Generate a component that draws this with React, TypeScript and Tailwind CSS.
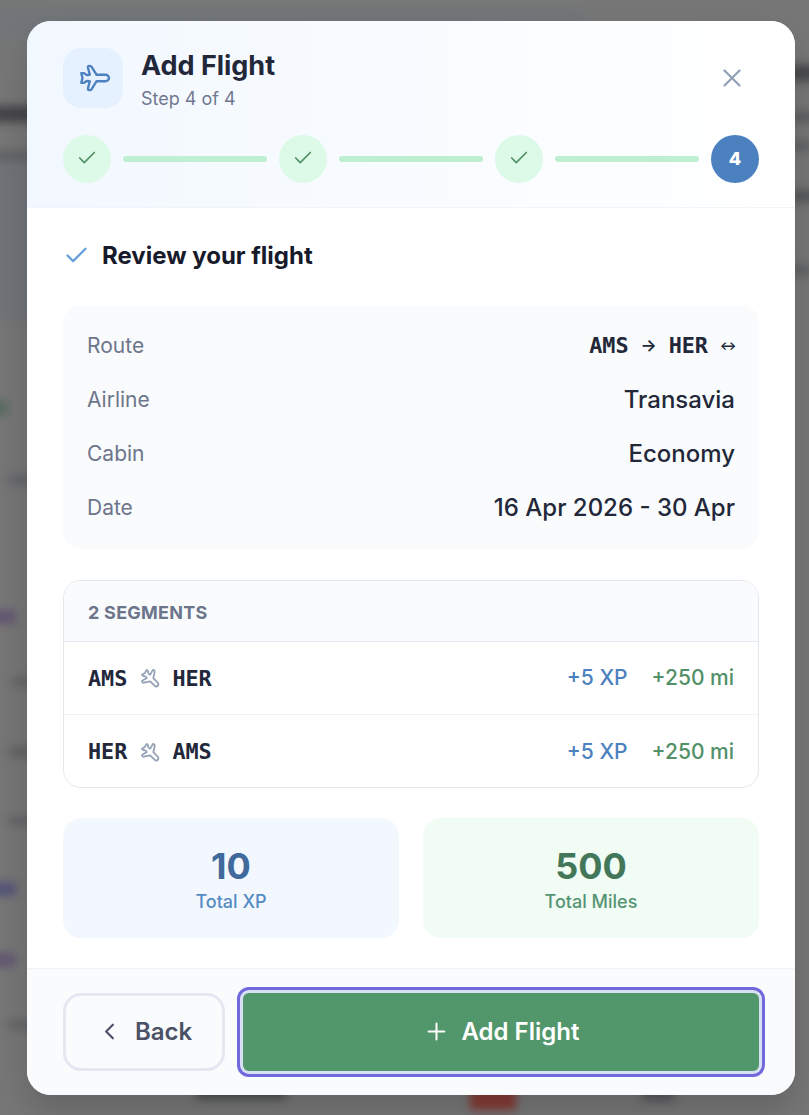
import { Check, ChevronLeft, Plus, X } from "lucide-react";

const details = [
  { label: "Airline", value: "Transavia" },
  { label: "Cabin", value: "Economy" },
  { label: "Date", value: "16 Apr 2026 - 30 Apr" },
];

const segments = [
  { from: "AMS", to: "HER", xp: "+5 XP", miles: "+250 mi" },
  { from: "HER", to: "AMS", xp: "+5 XP", miles: "+250 mi" },
];

const mono = "font-['DejaVu_Sans_Mono',monospace] font-bold";

interface PlaneProps {
  className?: string;
  strokeWidth?: number;
}

const Plane = ({
  className,
  strokeWidth = 2.4
}: PlaneProps) => {
  return <svg viewBox="-3 -16 32 32" className={className} overflow="visible" fill="none" stroke="currentColor" strokeWidth={strokeWidth} strokeLinejoin="round" strokeLinecap="round">
      <path d="M1.3 -4.9 L2.5 0 L1.3 4.9 H4 L6.6 3 L9.8 3.3 L8 10.2 Q7.6 12 9.3 12.1 H10 Q11 12.1 11.6 11.1 L16.6 3.2 H25.5 C27.5 3.2 29 1.7 29 0 C29 -1.7 27.5 -3.2 25.5 -3.2 H16.6 L11.6 -11.1 Q11 -12.1 10 -12.1 H9.3 Q7.6 -12 8 -10.2 L9.8 -3.3 L6.6 -3 L4 -4.9 Z" />
    </svg>;
};

// Blurred bits of the page behind the overlay
const Backdrop = () => {
  return <div className="absolute inset-0 overflow-hidden bg-[#777777]" aria-hidden="true">
      <div className="absolute top-[8px] -left-4 w-[600px] h-8 bg-[#72767a] blur-[6px]" />
      <div className="absolute top-[160px] -left-4 w-14 h-[160px] bg-[#707479] blur-[6px]" />
      <div className="absolute top-[106px] -left-6 w-16 h-4 bg-[#434348] blur-[5px]" />
      <div className="absolute top-[152px] -left-4 w-14 h-2 bg-[#5c5e62] blur-[5px]" />
      <div className="absolute top-[400px] -left-3 w-5 h-4 bg-[#5b6c61] blur-[4px]" />
      <div className="absolute top-[476px] left-2 w-8 h-2 bg-[#5e6065] blur-[5px]" />
      <div className="absolute top-[610px] -left-4 w-8 h-3.5 bg-[#655973] blur-[4px]" />
      <div className="absolute top-[678px] left-3 w-8 h-2 bg-[#606164] blur-[5px]" />
      <div className="absolute top-[748px] left-2 w-8 h-2 bg-[#5d5e61] blur-[5px]" />
      <div className="absolute top-[817px] left-2 w-8 h-2 bg-[#606164] blur-[5px]" />
      <div className="absolute top-[882px] -left-4 w-8 h-3.5 bg-[#55557a] blur-[4px]" />
      <div className="absolute top-[953px] -left-4 w-8 h-3.5 bg-[#655973] blur-[4px]" />
      <div className="absolute top-[1021px] left-2 w-8 h-2 bg-[#606164] blur-[5px]" />
      <div className="absolute top-[65px] left-[788px] w-10 h-4 bg-[#46474a] blur-[5px]" />
      <div className="absolute top-[112px] left-[788px] w-10 h-2.5 bg-[#5a5c5f] blur-[5px]" />
      <div className="absolute top-[141px] left-[788px] w-6 h-2.5 bg-[#5e6062] blur-[5px]" />
      <div className="absolute top-[190px] left-[788px] w-10 h-3 bg-[#545658] blur-[5px]" />
      <div className="absolute top-[265px] left-[788px] w-6 h-2.5 bg-[#5e6062] blur-[5px]" />
      <div className="absolute top-[1085px] left-[196px] w-[90px] h-3.5 bg-[#4a4c4e] blur-[5px]" />
      <div className="absolute top-[1086px] left-[470px] w-[46px] h-[24px] rounded bg-[#843a34] blur-[4px]" />
      <div className="absolute top-[1087px] left-[642px] w-8 h-3.5 bg-[#55565b] blur-[5px]" />
    </div>;
};

const StepDone = () => {
  return <>
      <div className="size-12 shrink-0 rounded-full bg-[#dcfae7] flex items-center justify-center">
        <Check className="size-[22px] -mt-0.5 text-[#549068]" strokeWidth={1.9} />
      </div>
      <div className="flex-1 h-1.5 rounded-full bg-[#bdefd0]" />
    </>;
};

const App = () => {
  return <div className="relative h-[1115px] w-full pt-[21px] pl-[27px] font-['Inter',sans-serif]">
      <Backdrop />

      <div className="relative flex flex-col w-[768px] h-[1074px] rounded-[24px] overflow-hidden bg-white shadow-[0_18px_36px_rgba(0,0,0,0.16)]">
        {/* Header */}
        <div className="h-[187px] shrink-0 px-9 pt-[27px] border-b border-[#f1f4f8] bg-gradient-to-r from-[#f2f8ff] to-white">
          <div className="flex items-center h-[60px]">
            <div className="size-[60px] rounded-[18px] bg-[#e5f1fe] flex items-center justify-center">
              <Plane className="size-8 text-[#4d81bf]" />
            </div>
            <div className="ml-[18px] pt-[3px] flex-1">
              <h2 className="text-[27px] leading-9 font-bold tracking-[-0.02px] text-[#22283a]">Add Flight</h2>
              <p className="text-[18px] leading-[27px] mt-px text-[#70788f]">Step 4 of 4</p>
            </div>
            <button className="mr-3 text-[#94a1b6]" aria-label="Close">
              <X className="size-[30px]" strokeWidth={1.9} />
            </button>
          </div>
          <div className="flex items-center gap-3 mt-[27px]">
            <StepDone />
            <StepDone />
            <StepDone />
            <div className="size-12 shrink-0 pb-0.5 rounded-full bg-[#4c81c0] text-white text-[18px] font-extrabold flex items-center justify-center">4</div>
          </div>
        </div>

        {/* Review */}
        <div className="flex-1 px-9 pt-[29px]">
          <div className="flex items-center gap-3 h-9">
            <Check className="size-[27px] text-[#649fda]" strokeWidth={2} />
            <h3 className="pt-0.5 text-[24px] font-bold tracking-[-0.01px] text-[#171a2b]">Review your flight</h3>
          </div>

          <div className="mt-8 h-[244px] rounded-[18px] bg-[#f9fbfd] px-6 pt-[23px] flex flex-col gap-[18px] text-[21px] text-[#6d758b]">
            <div className="flex items-center justify-between h-9">
              <span>Route</span>
              <span className={`${mono} flex items-center text-[21.8px] text-[#22283a]`}>
                AMS
                <span className="w-10 text-center font-['Inter',sans-serif] text-[17px] font-semibold">→</span>
                HER
                <span className="ml-[13px] w-[14px] flex justify-center font-['Inter',sans-serif] text-[12.5px] font-bold">↔</span>
              </span>
            </div>
            {details.map((row) => <div key={row.label} className="flex items-center justify-between h-9">
                <span>{row.label}</span>
                <span className="text-[24px] font-medium text-[#22283a]">{row.value}</span>
              </div>)}
          </div>

          <div className="mt-[31px] h-[208px] rounded-[18px] border border-[#e3e8ef] overflow-hidden">
            <div className="h-[61px] px-6 pt-0.5 flex items-center bg-[#f9fbfd] border-b border-[#e3e8ef] text-[18px] font-bold tracking-[0.25px] text-[#6d758b]">
              2 SEGMENTS
            </div>
            {segments.map((s) => <div key={s.from} className="h-[73px] px-6 flex items-center border-b border-[#f0f2f6] last:border-b-0">
                <span className={`${mono} pt-0.5 text-[21.8px] text-[#22283a]`}>{s.from}</span>
                <Plane className="size-[22px] ml-3 mr-[11px] rotate-45 text-[#94a1b6]" strokeWidth={2.6} />
                <span className={`${mono} pt-0.5 text-[21.8px] text-[#22283a]`}>{s.to}</span>
                <span className="ml-auto text-[21px] font-medium text-[#4c81c0]">{s.xp}</span>
                <span className="ml-6 text-[21px] font-medium text-[#529068]">{s.miles}</span>
              </div>)}
          </div>

          <div className="mt-[30px] grid grid-cols-2 gap-6 text-center">
            <div className="h-[120px] rounded-[18px] bg-[#f2f8fe] pt-[24px]">
              <div className="text-[36px] leading-[48px] font-bold text-[#40699c]">10</div>
              <div className="text-[18px] leading-6 font-medium text-[#568bc4]">Total XP</div>
            </div>
            <div className="h-[120px] rounded-[18px] bg-[#f1fcf4] pt-[24px]">
              <div className="text-[36px] leading-[48px] font-bold text-[#43775a]">500</div>
              <div className="text-[18px] leading-6 font-medium text-[#559473]">Total Miles</div>
            </div>
          </div>
        </div>

        {/* Actions */}
        <div className="h-[127px] shrink-0 flex gap-[18px] px-9 pt-6 border-t border-[#f0f2f6] bg-[#f9fbfd]">
          <button className="w-[162px] h-[78px] rounded-[18px] border-3 border-[#e4e8f0] flex items-center justify-center gap-3 text-[24px] font-semibold text-[#4b5267]">
            <ChevronLeft className="size-[27px] -mt-px" strokeWidth={1.9} />
            Back
          </button>
          <button className="flex-1 h-[78px] rounded-[6px] bg-[#52966c] flex items-center justify-center gap-3 text-[24px] font-semibold text-white shadow-[0_0_0_3px_#d8e0f3,0_0_0_6px_#7069dc]">
            <Plus className="size-[27px] -mt-px" strokeWidth={1.8} />
            Add Flight
          </button>
        </div>
      </div>
    </div>;
};

export default App;
